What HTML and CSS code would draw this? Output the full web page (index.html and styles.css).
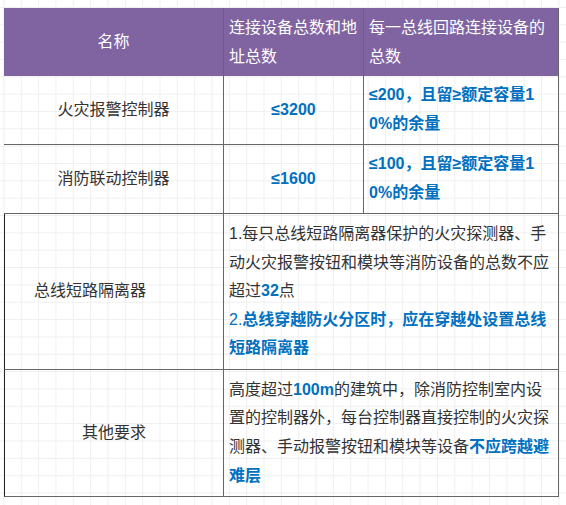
FILE: index.html
```html
<!DOCTYPE html>
<html lang="zh-CN">
<head>
<meta charset="utf-8">
<title>总线设备要求</title>
<link rel="stylesheet" href="styles.css">
</head>
<body>
<div class="sheet">
  <div class="cell head center c1">名称</div>
  <div class="cell head c2">连接设备总数和地<br>址总数</div>
  <div class="cell head c3">每一总线回路连接设备的<br>总数</div>

  <div class="cell center c1 r1">火灾报警控制器</div>
  <div class="cell center c2 r1"><b class="hl">≤3200</b></div>
  <div class="cell c3 r1"><b class="hl">≤200，且留≥额定容量1<br>0%的余量</b></div>

  <div class="cell center c1 r2">消防联动控制器</div>
  <div class="cell center c2 r2"><b class="hl">≤1600</b></div>
  <div class="cell c3 r2"><b class="hl">≤100，且留≥额定容量1<br>0%的余量</b></div>

  <div class="cell c1 r3 edge indent">总线短路隔离器</div>
  <div class="cell span r3"><div>1.每只总线短路隔离器保护的火灾探测器、手<br>动火灾报警按钮和模块等消防设备的总数不应<br>超过<b class="hl">32</b>点<br><span class="blue">2.</span><b class="hl">总线穿越防火分区时，应在穿越处设置总线<br>短路隔离器</b></div></div>

  <div class="cell center c1 r4 edge">其他要求</div>
  <div class="cell span r4"><div>高度超过<b class="hl">100m</b>的建筑中，除消防控制室内设<br>置的控制器外，每台控制器直接控制的火灾探<br>测器、手动报警按钮和模块等设备<b class="hl">不应跨越避<br>难层</b></div></div>
</div>
</body>
</html>
```

FILE: styles.css
```css
html, body {
  margin: 0;
  padding: 0;
}
body {
  background-color: #ffffff;
  background-image:
    linear-gradient(to right, #efefef 1px, transparent 1px),
    linear-gradient(to bottom, #efefef 1px, transparent 1px);
  background-size: 17.35px 17.35px;
  background-position: 3.4px 6.9px;
  padding: 8px 0 0 4px;
  font-family: "Liberation Sans", "Noto Sans CJK SC", sans-serif;
  font-size: 16px;
  color: #333333;
}
.sheet {
  display: grid;
  grid-template-columns: 220px 140px 195px;
  grid-template-rows: 68px 69px 69px 156px 127px;
  width: 555px;
}
.cell {
  box-sizing: border-box;
  display: flex;
  align-items: center;
  line-height: 28.6px;
  white-space: nowrap;
  padding: 0 5px;
  border-right: 1px solid #666666;
  border-bottom: 1px solid #666666;
}
.center {
  justify-content: center;
}
.head {
  background: #8064a2;
  color: #ffffff;
  border-bottom: none;
  padding-top: 1px;
}
.c3 {
  padding-left: 5px;
}
.span {
  grid-column: 2 / 4;
}
.edge {
  border-left: 1px solid #222222;
}
.indent {
  padding-left: 29px;
}
.hl {
  color: #0070c0;
  font-weight: 700;
}
.blue {
  color: #0070c0;
}
```
